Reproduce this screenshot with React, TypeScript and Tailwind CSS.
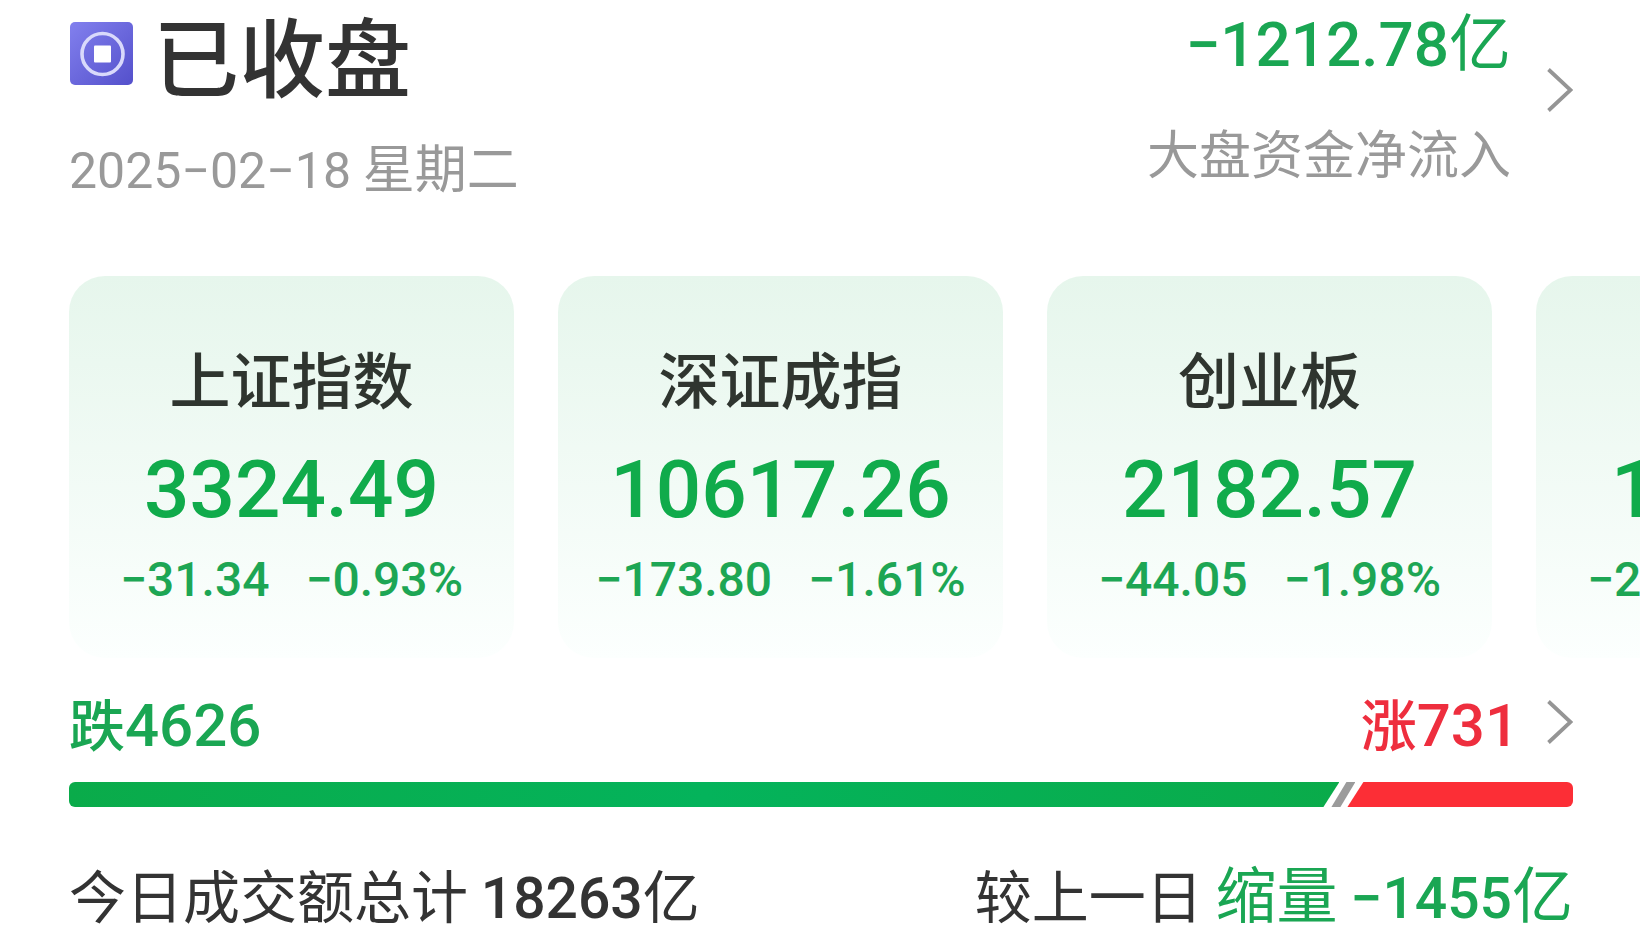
import type { ReactNode } from "react";

interface IndexQuote {
  name: string;
  value: string;
  change: string;
  percent: string;
}

const quotes: IndexQuote[] = [
  { name: "上证指数", value: "3324.49", change: "−31.34", percent: "−0.93%" },
  { name: "深证成指", value: "10617.26", change: "−173.80", percent: "−1.61%" },
  { name: "创业板", value: "2182.57", change: "−44.05", percent: "−1.98%" },
  { name: "北证50", value: "1277.17", change: "−27.82", percent: "−2.13%" },
];

// Digits set inline next to Chinese text
const Num = ({ children }: { children: ReactNode }) => (
  <span className="font-[Roboto,sans-serif] leading-none font-medium">
    {children}
  </span>
);

const Chevron = () => (
  <svg viewBox="0 0 26 44" className="h-11 w-[26px] shrink-0" fill="none" aria-hidden="true">
    <path d="M1.5 1.5 L23.5 22 L1.5 42.5" stroke="#959595" strokeWidth="3.8" />
  </svg>
);

const CoinIcon = () => (
  <svg viewBox="0 0 64 64" className="size-16 shrink-0" aria-hidden="true">
    <defs>
      <linearGradient id="coin" x1="0" y1="0" x2="1" y2="1">
        <stop offset="0" stopColor="#8280ee" />
        <stop offset="1" stopColor="#5450cb" />
      </linearGradient>
    </defs>
    <rect x="1" width="63" height="63" rx="5" fill="url(#coin)" />
    <circle cx="33.5" cy="32" r="20.5" fill="none" stroke="#d9d9fb" strokeWidth="3.6" />
    <rect x="25" y="23.5" width="17" height="17" rx="1" fill="#fff" />
  </svg>
);

const QuoteCard = ({ quote }: { quote: IndexQuote }) => (
  <article className="flex w-[445px] shrink-0 flex-col items-center rounded-[36px] bg-linear-to-b from-[#e6f6ec] to-[#fcfffe] pt-[66px] pb-12 whitespace-nowrap">
    <h2 className="text-[61px] leading-[72px] font-medium text-[#2f352f]">
      {quote.name}
    </h2>
    <p className="mt-7 font-[Roboto,sans-serif] text-[80px] leading-24 font-medium text-[#10ab4b]">
      {quote.value}
    </p>
    <p className="mt-3 flex gap-9 font-[Roboto,sans-serif] text-[48px] leading-15 font-medium text-[#1da654]">
      <span>{quote.change}</span>
      <span>{quote.percent}</span>
    </p>
  </article>
);

const App = () => {
  return (
    <main className="bg-white pl-[69px] font-['Noto_Sans_CJK_SC',sans-serif] text-[#333]">
      {/* Market status */}
      <header className="flex items-start justify-between pt-1 pr-[67px]">
        <div className="pt-1">
          <div className="flex items-center gap-5">
            <CoinIcon />
            <h1 className="text-[86px] leading-[92px] font-medium">已收盘</h1>
          </div>
          <p className="mt-9 text-[52px] leading-15 text-[#999]">
            <span className="font-[Roboto,sans-serif] text-[50px] leading-none">
              2025−02−18
            </span>{" "}
            星期二
          </p>
        </div>
        <a href="#flow" className="flex items-start gap-9">
          <span className="flex flex-col items-end">
            <span className="text-[62px] leading-[70px] text-[#1aa653]">
              <Num>−1212.78</Num>亿
            </span>
            <span className="mt-12 text-[52px] leading-14 text-[#999]">
              大盘资金净流入
            </span>
          </span>
          <span className="mt-16">
            <Chevron />
          </span>
        </a>
      </header>

      {/* Index cards, the last one runs off the edge */}
      <section className="mt-20 flex gap-11 overflow-hidden">
        {quotes.map((quote) => (
          <QuoteCard key={quote.name} quote={quote} />
        ))}
      </section>

      <section className="pr-[67px]">
        {/* Fallers and risers */}
        <div className="mt-7 flex items-center justify-between text-[56px] leading-[72px] font-medium">
          <span className="text-[#1aa653]">
            跌
            <span className="text-[60px] leading-none">
              <Num>4626</Num>
            </span>
          </span>
          <a href="#breadth" className="flex items-center gap-7 text-[#ee2e3e]">
            <span>
              涨
              <span className="text-[60px] leading-none">
                <Num>731</Num>
              </span>
            </span>
            <Chevron />
          </a>
        </div>
        <div className="mt-6 flex h-[25px]">
          <div className="flex-1 rounded-l-md bg-linear-to-r from-[#0aab4a] via-[#04b35b] to-[#0aab4a] [clip-path:polygon(0_0,100%_0,calc(100%-16px)_100%,0_100%)]" />
          <div className="-ml-2 w-6 bg-[#9b9b9b] [clip-path:polygon(15px_0,100%_0,9px_100%,0_100%)]" />
          <div className="-ml-2 w-[15%] rounded-r-md bg-[#fc2e36] [clip-path:polygon(16px_0,100%_0,100%_100%,0_100%)]" />
        </div>

        {/* Turnover */}
        <div className="mt-[50px] flex justify-between text-[57px] leading-[72px]">
          <p>
            今日成交额总计 <Num>18263</Num>亿
          </p>
          <p>
            较上一日{" "}
            <span className="text-[#1aa653]">
              <span className="text-[61px] leading-none">缩量</span>{" "}
              <Num>−1455</Num>
              <span className="text-[61px] leading-none">亿</span>
            </span>
          </p>
        </div>
      </section>
    </main>
  );
};

export default App;
